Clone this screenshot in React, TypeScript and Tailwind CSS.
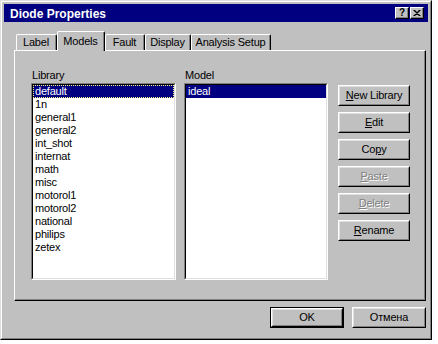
import React from 'react';

const libs = ['default', '1n', 'general1', 'general2', 'int_shot', 'internat', 'math', 'misc', 'motorol1', 'motorol2', 'national', 'philips', 'zetex'];

function Bevel({ children }: { children: React.ReactNode }) {
  return (
    <div className="h-full w-full border border-t-white border-l-white border-r-black border-b-black">
      <div className="h-full w-full border border-t-[#dfdfdf] border-l-[#dfdfdf] border-r-[#808080] border-b-[#808080] flex items-center justify-center">
        {children}
      </div>
    </div>
  );
}

function Btn({ children, disabled, isDefault, w }: { children: React.ReactNode; disabled?: boolean; isDefault?: boolean; w: string }) {
  const text = (
    <span className={disabled ? 'text-[#808080] [text-shadow:1px_1px_0_#ffffff]' : 'text-black'}>{children}</span>
  );
  if (isDefault) {
    return (
      <div className={`${w} h-[21px] border border-black`}>
        <Bevel>{text}</Bevel>
      </div>
    );
  }
  return (
    <div className={`${w} h-[21px]`}>
      <Bevel>{text}</Bevel>
    </div>
  );
}

function CapBtn({ children }: { children: React.ReactNode }) {
  return (
    <div className="w-[14px] h-[12px] bg-[#c0c0c0] border border-t-white border-l-white border-r-black border-b-black shadow-[inset_-1px_-1px_0_#808080] flex items-center justify-center overflow-hidden">
      {children}
    </div>
  );
}

function ListBox({ children }: { children: React.ReactNode }) {
  return (
    <div className="h-[197px] border border-t-[#808080] border-l-[#808080] border-r-white border-b-white">
      <div className="h-full border border-t-black border-l-black border-r-[#dfdfdf] border-b-[#dfdfdf] bg-white">
        {children}
      </div>
    </div>
  );
}

function Tab({ label, selected, w }: { label: string; selected?: boolean; w: string }) {
  if (selected) {
    return (
      <div className={`${w} h-[20px] -mb-[1px] relative z-10 bg-[#c0c0c0] border-t border-l border-t-white border-l-white border-r border-r-black rounded-tl-[2px] rounded-tr-[2px] flex`}>
        <div className="flex-1 border-r border-r-[#808080] flex items-center justify-center pb-[1px]">{label}</div>
      </div>
    );
  }
  return (
    <div className={`${w} h-[16px] bg-[#c0c0c0] border-t border-l border-t-white border-l-white border-r border-r-black rounded-tl-[2px] rounded-tr-[2px] flex`}>
      <div className="flex-1 border-r border-r-[#808080] flex items-center justify-center">{label}</div>
    </div>
  );
}

export default function App() {
  return (
    <div className="w-[438px] h-[344px] bg-white font-['Liberation_Sans',Arial,sans-serif] text-[11px] leading-[13px] text-black tracking-[-0.2px]">
      <div className="w-[432px] h-[340px] border border-t-[#dfdfdf] border-l-[#dfdfdf] border-r-black border-b-black">
        <div className="h-full border border-t-white border-l-white border-r-[#808080] border-b-[#808080] bg-[#c0c0c0] p-[2px] flex flex-col">
          {/* Title bar */}
          <div className="h-[18px] bg-[#000080] flex items-center pl-[6px] pr-[4px]">
            <div className="flex-1 text-white font-bold text-[12px] tracking-normal leading-[18px] pt-[1px]">Diode Properties</div>
            <div className="flex gap-[1px]">
              <CapBtn>
                <span className="font-bold text-[10px] leading-[10px] tracking-normal text-black -mt-[1px]">?</span>
              </CapBtn>
              <CapBtn>
                <svg width="8" height="7" viewBox="0 0 8 7" className="block">
                  <path d="M0 0 L6 6 L7 6 L1 0 Z M6 0 L0 6 L1 6 L7 0 Z M1 0 L7 6 L8 6 L2 0 Z M7 0 L1 6 L2 6 L8 0 Z" fill="black" />
                </svg>
              </CapBtn>
            </div>
          </div>

          {/* Tabs */}
          <div className="mt-[9px] ml-[12px] h-[19px] flex items-end">
            <Tab label="Label" w="w-[41px]" />
            <Tab label="Models" w="w-[48px]" selected />
            <Tab label="Fault" w="w-[40px]" />
            <Tab label="Display" w="w-[46px]" />
            <Tab label="Analysis Setup" w="w-[80px]" />
          </div>

          {/* Panel */}
          <div className="ml-[10px] mr-[2px] h-[251px] border border-t-white border-l-white border-r-black border-b-black">
            <div className="h-full border-r border-b border-r-[#808080] border-b-[#808080] pt-[18px] pl-[16px] flex">
              <div className="w-[145px] flex flex-col">
                <div className="h-[13px] mb-[1px] pl-[1px]">Library</div>
                <ListBox>
                  {libs.map((l, i) =>
                    i === 0 ? (
                      <div key={l} className="h-[13px] pl-[2px] bg-[#000080] text-white outline outline-1 outline-dotted outline-[#ffff80] -outline-offset-1">
                        {l}
                      </div>
                    ) : (
                      <div key={l} className="h-[13px] pl-[2px]">
                        {l}
                      </div>
                    )
                  )}
                </ListBox>
              </div>
              <div className="w-[144px] ml-[8px] flex flex-col">
                <div className="h-[13px] mb-[1px] pl-[1px]">Model</div>
                <ListBox>
                  <div className="h-[13px] pl-[2px] bg-[#000080] text-white">ideal</div>
                </ListBox>
              </div>
              <div className="ml-[10px] pt-[16px] flex flex-col gap-[6px]">
                <Btn w="w-[72px]">
                  <span className="underline">N</span>ew Library
                </Btn>
                <Btn w="w-[72px]">
                  <span className="underline">E</span>dit
                </Btn>
                <Btn w="w-[72px]">
                  Co<span className="underline">p</span>y
                </Btn>
                <Btn w="w-[72px]" disabled>
                  <span className="underline">P</span>aste
                </Btn>
                <Btn w="w-[72px]" disabled>
                  <span className="underline">D</span>elete
                </Btn>
                <Btn w="w-[72px]">
                  <span className="underline">R</span>ename
                </Btn>
              </div>
            </div>
          </div>

          {/* Bottom buttons */}
          <div className="mt-[6px] mr-[2px] flex justify-end gap-[8px]">
            <Btn w="w-[74px]" isDefault>
              OK
            </Btn>
            <Btn w="w-[74px]">Отмена</Btn>
          </div>
        </div>
      </div>
    </div>
  );
}
